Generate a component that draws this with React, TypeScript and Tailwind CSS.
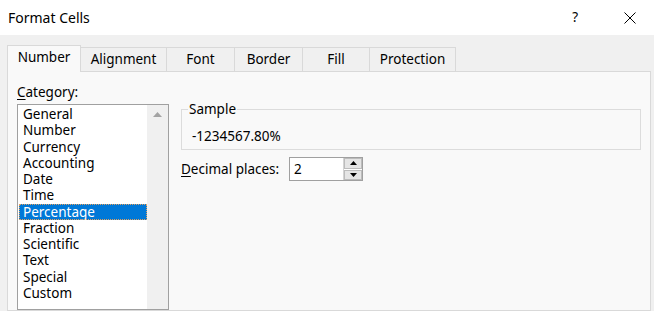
const tabs = [
  { label: "Number", w: "w-[74px]" },
  { label: "Alignment", w: "w-[86px]" },
  { label: "Font", w: "w-[68px]" },
  { label: "Border", w: "w-[68px]" },
  { label: "Fill", w: "w-[67px]" },
  { label: "Protection", w: "w-[86px]" },
];

const categories = [
  "General",
  "Number",
  "Currency",
  "Accounting",
  "Date",
  "Time",
  "Percentage",
  "Fraction",
  "Scientific",
  "Text",
  "Special",
  "Custom",
];

function CloseIcon() {
  return (
    <svg width="12" height="12" viewBox="0 0 12 12" className="text-black">
      <path d="M0.5 0.5 L11.5 11.5 M11.5 0.5 L0.5 11.5" stroke="currentColor" strokeWidth="1" fill="none" />
    </svg>
  );
}

function Spinner() {
  return (
    <div className="flex flex-col w-[19px] h-[22px] border-l border-[#d4d4d4]">
      <button className="flex-1 flex items-center justify-center bg-[#e5e5e5] border border-[#bcbcbc] mb-[1px]">
        <svg width="7" height="4" viewBox="0 0 7 4"><path d="M3.5 0 L7 4 L0 4 Z" fill="#000" /></svg>
      </button>
      <button className="flex-1 flex items-center justify-center bg-[#e5e5e5] border border-[#bcbcbc]">
        <svg width="7" height="4" viewBox="0 0 7 4"><path d="M0 0 L7 0 L3.5 4 Z" fill="#000" /></svg>
      </button>
    </div>
  );
}

export default function App() {
  const selected = "Percentage";
  return (
    <div
      className="w-[654px] h-[311px] overflow-hidden bg-[#f0f0f0] text-black flex flex-col"
      style={{ fontFamily: '"Noto Sans", "Open Sans", sans-serif' }}
    >
      {/* title bar */}
      <div className="h-[35px] bg-white flex items-center shrink-0">
        <span className="ml-[8px] text-[14px] leading-none">Format Cells</span>
        <span className="ml-auto text-[13.5px] leading-none mr-[46px]">?</span>
        <span className="mr-[18px] flex items-center"><CloseIcon /></span>
      </div>

      <div className="flex-1 flex flex-col pl-[7px] pr-[3px] pt-[9px]">
        {/* tabs */}
        <div className="flex items-end h-[27px] shrink-0">
          {tabs.map((t, i) => (
            <div
              key={t.label}
              className={`${t.w} flex items-center justify-center text-[13.5px] border-t border-r border-[#d9d9d9] ${
                i === 0
                  ? "h-[27px] border-l bg-[#f9f9f9] relative top-px z-10 pb-[4px]"
                  : "h-[24px] bg-[#f0f0f0]"
              }`}
            >
              {t.label}
            </div>
          ))}
        </div>

        {/* panel */}
        <div className="flex-1 border border-[#d9d9d9] bg-[#f9f9f9] flex pl-[9px] pt-[11px] gap-[12px]">
          <div className="flex flex-col">
            <div className="text-[13.5px] leading-[18px] h-[21px]">
              <span className="underline underline-offset-2">C</span>ategory:
            </div>
            <div className="w-[152px] flex-1 border border-[#a0a0a0] bg-white flex">
              <div className="flex-1 flex flex-col pl-px pt-px">
                {categories.map((c) => (
                  <div
                    key={c}
                    className={`h-[16.25px] leading-[16.25px] text-[13.5px] pl-[4px] ${
                      c === selected
                        ? "bg-[#0078d7] text-white outline outline-1 outline-dotted -outline-offset-1 outline-[#e0a060]"
                        : ""
                    }`}
                  >
                    {c}
                  </div>
                ))}
              </div>
              <div className="w-[21px] bg-[#f0f0f0] flex justify-center pt-[7px]">
                <svg width="9" height="5" viewBox="0 0 9 5"><path d="M4.5 0 L9 5 L0 5 Z" fill="#a3a3a3" /></svg>
              </div>
            </div>
          </div>

          <div className="flex flex-col pt-[26px] w-[460px]">
            <fieldset className="h-[48px] border border-[#dcdcdc] px-[6px] -mt-[7px]">
              <legend className="text-[13.5px] leading-[14px] px-px">Sample</legend>
              <div className="text-[13.5px] leading-none pt-[14px] pl-[4px]">-1234567.80%</div>
            </fieldset>
            <div className="flex items-center mt-[7px] h-[24px]">
              <span className="text-[13.5px] w-[108px]">
                <span className="underline underline-offset-2">D</span>ecimal places:
              </span>
              <div className="w-[74px] h-[24px] border border-[#a0a0a0] bg-white flex items-center">
                <span className="flex-1 text-[13.5px] pl-[4px]">2</span>
                <Spinner />
              </div>
            </div>
          </div>
        </div>
      </div>
    </div>
  );
}
